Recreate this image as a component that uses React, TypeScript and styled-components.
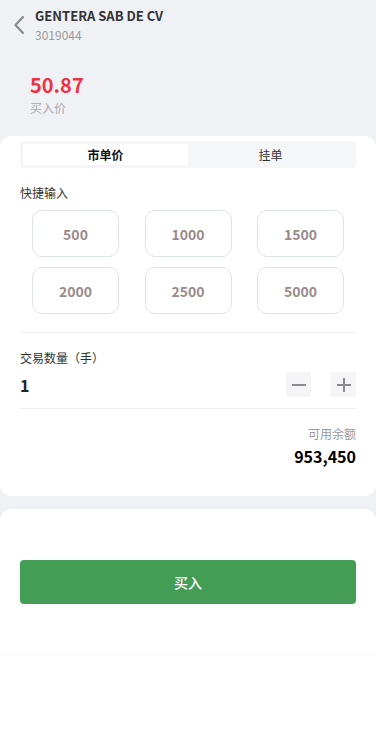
import React, { useState } from "react";
import styled, { createGlobalStyle } from "styled-components";

const GlobalStyle = createGlobalStyle`
  html, body {
    margin: 0;
    padding: 0;
    background: #f0f1f5;
    font-family: "Noto Sans CJK SC", "Noto Sans", sans-serif;
  }
  * { box-sizing: border-box; }
`;

const Page = styled.div`
  width: 376px;
  min-height: 744px;
  background: #f0f1f5;
  display: flex;
  flex-direction: column;
`;

const Header = styled.div`
  display: flex;
  align-items: flex-start;
  padding: 6px 0 0 11px;
  height: 48px;
`;

const BackButton = styled.button`
  border: none;
  background: none;
  padding: 0;
  margin: 8px 8px 0 0;
  width: 16px;
  height: 22px;
  display: flex;
  align-items: center;
  justify-content: center;
  cursor: pointer;
`;

const TitleBlock = styled.div`
  display: flex;
  flex-direction: column;
`;

const Title = styled.div`
  font-size: 13px;
  font-weight: 700;
  color: #333;
  line-height: 19px;
`;

const Code = styled.div`
  font-size: 12px;
  color: #999;
  line-height: 17px;
  margin-top: 1px;
`;

const PriceBlock = styled.div`
  padding: 24px 30px 0;
  height: 88px;
`;

const Price = styled.div`
  font-size: 20px;
  font-weight: 700;
  color: #ea3443;
  line-height: 26px;
`;

const PriceLabel = styled.div`
  font-size: 12px;
  color: #aaa;
  line-height: 17px;
  margin-top: 1px;
`;

const Card = styled.div`
  background: #fff;
  border-radius: 12px;
  padding: 5px 20px 0;
  height: 360px;
`;

const Tabs = styled.div`
  display: flex;
  background: #f5f6f7;
  border-radius: 4px;
  padding: 3px;
  height: 27px;
`;

const Tab = styled.button<{ $active?: boolean }>`
  flex: 1;
  border: none;
  border-radius: 3px;
  background: ${(p) => (p.$active ? "#fff" : "transparent")};
  font-family: inherit;
  font-size: 12px;
  font-weight: ${(p) => (p.$active ? 700 : 400)};
  color: ${(p) => (p.$active ? "#111" : "#333")};
  padding: 0;
  cursor: pointer;
`;

const SectionLabel = styled.div`
  font-size: 12px;
  color: #333;
  line-height: 17px;
  margin-top: 16px;
`;

const QuickGrid = styled.div`
  display: grid;
  grid-template-columns: repeat(3, 87px);
  justify-content: space-between;
  row-gap: 10px;
  padding: 0 12px;
  margin-top: 9px;
`;

const QuickButton = styled.button`
  height: 47px;
  border: 1px solid #dfe3e2;
  border-radius: 10px;
  background: #fff;
  font-family: inherit;
  font-size: 14px;
  font-weight: 700;
  color: #9a8b8b;
  cursor: pointer;
`;

const Divider = styled.div<{ $gap?: number }>`
  height: 1px;
  background: #f0f0f0;
  margin-top: ${(p) => p.$gap ?? 0}px;
`;

const QtyLabel = styled.div`
  font-size: 12px;
  color: #333;
  line-height: 17px;
  margin-top: 16px;
`;

const QtyRow = styled.div`
  display: flex;
  align-items: center;
  justify-content: space-between;
  height: 25px;
  margin: 6px 0 11px;
`;

const QtyValue = styled.div`
  font-size: 16px;
  font-weight: 700;
  color: #222;
`;

const Stepper = styled.div`
  display: flex;
  gap: 20px;
`;

const StepButton = styled.button`
  width: 25px;
  height: 25px;
  border: none;
  border-radius: 3px;
  background: #f5f5f7;
  padding: 0;
  display: flex;
  align-items: center;
  justify-content: center;
  cursor: pointer;
`;

const Balance = styled.div`
  display: flex;
  flex-direction: column;
  align-items: flex-end;
  margin-top: 16px;
`;

const BalanceLabel = styled.div`
  font-size: 12px;
  color: #999;
  line-height: 17px;
`;

const BalanceValue = styled.div`
  font-size: 16px;
  font-weight: 700;
  color: #000;
  line-height: 22px;
  margin-top: 3px;
`;

const BottomCard = styled.div`
  background: #fff;
  border-radius: 12px 12px 0 0;
  margin-top: 13px;
  flex: 1;
  display: flex;
  flex-direction: column;
`;

const ActionArea = styled.div`
  padding: 51px 20px 50px;
  border-bottom: 1px solid #f7f7f7;
`;

const BuyButton = styled.button`
  width: 100%;
  height: 44px;
  border: none;
  border-radius: 4px;
  background: #449d55;
  color: #fff;
  font-family: inherit;
  font-size: 14px;
  font-weight: 500;
  cursor: pointer;
`;

const quick = [500, 1000, 1500, 2000, 2500, 5000];

export default function App() {
  const [tab, setTab] = useState(0);
  const [qty, setQty] = useState(1);

  return (
    <Page>
      <GlobalStyle />
      <Header>
        <BackButton aria-label="back">
          <svg width="12" height="20" viewBox="0 0 12 20" fill="none">
            <path d="M10 2 L2.5 10 L10 18" stroke="#8a8a8f" strokeWidth="2.2" strokeLinecap="round" strokeLinejoin="round" />
          </svg>
        </BackButton>
        <TitleBlock>
          <Title>GENTERA SAB DE CV</Title>
          <Code>3019044</Code>
        </TitleBlock>
      </Header>
      <PriceBlock>
        <Price>50.87</Price>
        <PriceLabel>买入价</PriceLabel>
      </PriceBlock>
      <Card>
        <Tabs>
          <Tab $active={tab === 0} onClick={() => setTab(0)}>市单价</Tab>
          <Tab $active={tab === 1} onClick={() => setTab(1)}>挂单</Tab>
        </Tabs>
        <SectionLabel>快捷输入</SectionLabel>
        <QuickGrid>
          {quick.map((q) => (
            <QuickButton key={q} onClick={() => setQty(q)}>{q}</QuickButton>
          ))}
        </QuickGrid>
        <Divider $gap={18} />
        <QtyLabel>交易数量（手）</QtyLabel>
        <QtyRow>
          <QtyValue>{qty}</QtyValue>
          <Stepper>
            <StepButton aria-label="minus" onClick={() => setQty(Math.max(1, qty - 1))}>
              <svg width="16" height="16" viewBox="0 0 16 16">
                <path d="M1 8 H15" stroke="#8c8c8c" strokeWidth="2" />
              </svg>
            </StepButton>
            <StepButton aria-label="plus" onClick={() => setQty(qty + 1)}>
              <svg width="16" height="16" viewBox="0 0 16 16">
                <path d="M1 8 H15 M8 1 V15" stroke="#8c8c8c" strokeWidth="2" />
              </svg>
            </StepButton>
          </Stepper>
        </QtyRow>
        <Divider />
        <Balance>
          <BalanceLabel>可用余额</BalanceLabel>
          <BalanceValue>953,450</BalanceValue>
        </Balance>
      </Card>
      <BottomCard>
        <ActionArea>
          <BuyButton>买入</BuyButton>
        </ActionArea>
      </BottomCard>
    </Page>
  );
}
